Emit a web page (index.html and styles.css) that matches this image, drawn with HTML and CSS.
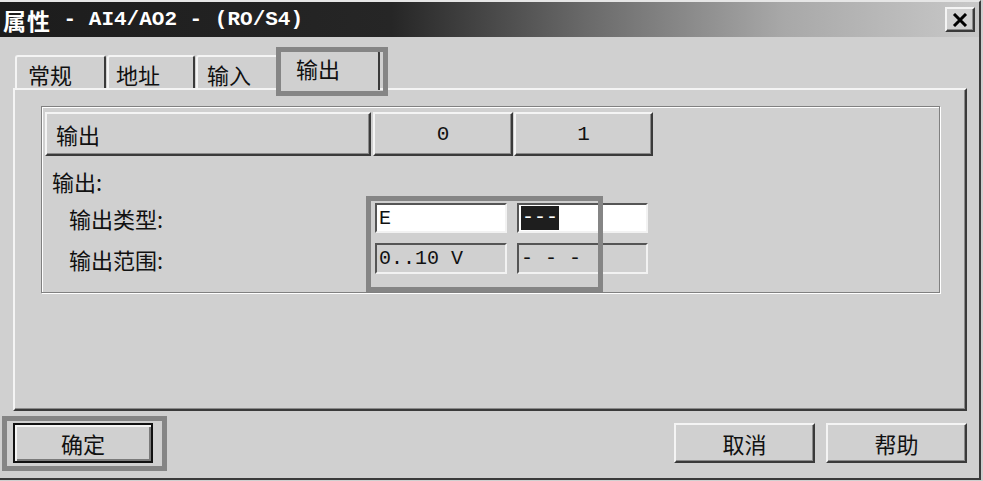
FILE: index.html
```html
<!DOCTYPE html>
<html lang="zh-CN">
<head>
<meta charset="utf-8">
<title>属性 - AI4/AO2 - (RO/S4)</title>
<link rel="stylesheet" href="styles.css">
</head>
<body>
<div class="window">
  <div class="titlebar">
    <div class="title"><span class="title-cjk">属性</span><span class="title-mono"> - AI4/AO2 - (RO/S4)</span></div>
    <div class="close">
      <svg width="16" height="14" viewBox="0 0 16 14"><path d="M2 1 L14 13 M14 1 L2 13" stroke="#000" stroke-width="3" fill="none"/></svg>
    </div>
  </div>

  <div class="tabs">
    <div class="tab tab-1">常规</div>
    <div class="tab tab-2">地址</div>
    <div class="tab tab-3">输入</div>
    <div class="tab tab-active">输出</div>
  </div>

  <div class="panel">
    <div class="group">
      <div class="header">
        <div class="hcell hname">输出</div>
        <div class="hcell hnum h0">0</div>
        <div class="hcell hnum h1">1</div>
      </div>
      <div class="section">输出:</div>
      <div class="rows">
        <div class="label">输出类型:</div>
        <div class="field field-white">E</div>
        <div class="field field-white"><span class="sel">---</span></div>
        <div class="label">输出范围:</div>
        <div class="field">0..10 V</div>
        <div class="field">- - -</div>
      </div>
    </div>
  </div>

  <div class="buttons">
    <div class="btn btn-default">确定</div>
    <div class="btn-group">
      <div class="btn">取消</div>
      <div class="btn">帮助</div>
    </div>
  </div>

  <div class="mark mark-tab"></div>
  <div class="mark mark-fields"></div>
  <div class="mark mark-ok"></div>
</div>
</body>
</html>
```

FILE: styles.css
```css
html, body {
  margin: 0;
  padding: 0;
  background: #d0d0d0;
}

body {
  width: 983px;
  height: 481px;
  overflow: hidden;
  font-family: "Noto Sans CJK SC", "Liberation Sans", sans-serif;
  font-size: 22px;
  color: #111;
}

.window {
  position: relative;
  box-sizing: border-box;
  width: 981px;
  height: 480px;
  background: #d0d0d0;
  border-top: 2px solid #e6e6e6;
  border-right: 2px solid #3a3a3a;
  border-bottom: 2px solid #3a3a3a;
  display: flex;
  flex-direction: column;
}

/* Title bar */
.titlebar {
  height: 35px;
  flex: none;
  display: flex;
  align-items: center;
  justify-content: space-between;
  padding: 0 4px 0 3px;
  background: linear-gradient(to right, #1c1c1c 0%, #262626 40%, #6a6a6a 60%, #a8a8a8 80%, #c8c8c8 100%);
  color: #fff;
}

.title {
  display: flex;
  align-items: center;
  font-weight: bold;
  white-space: pre;
}

.title-cjk {
  font-size: 23px;
  letter-spacing: 1px;
}

.title-mono {
  font-family: "Liberation Mono", monospace;
  font-size: 21px;
}

.close {
  box-sizing: border-box;
  width: 30px;
  height: 25px;
  background: #d0d0d0;
  border: 2px solid;
  border-color: #f4f4f4 #3a3a3a #3a3a3a #f4f4f4;
  box-shadow: inset -1px -1px 0 #8a8a8a;
  display: flex;
  align-items: center;
  justify-content: center;
}

/* Tabs */
.tabs {
  flex: none;
  display: flex;
  align-items: flex-end;
  height: 40px;
  margin-top: 13px;
  padding-left: 15px;
}

.tab {
  box-sizing: border-box;
  height: 33px;
  margin-bottom: 2px;
  display: flex;
  align-items: center;
  padding-left: 11px;
  padding-top: 3px;
  border-top: 2px solid #f4f4f4;
  border-left: 2px solid #f4f4f4;
  border-right: 2px solid #3a3a3a;
  border-radius: 3px 3px 0 0;
  background: #d0d0d0;
}

.tab-1 { width: 91px; }
.tab-2 { width: 88px; margin-left: 1px; padding-left: 7px; }
.tab-3 { width: 83px; margin-left: 1px; padding-left: 9px; }

.tab-active {
  position: relative;
  z-index: 1;
  width: 102px;
  height: 40px;
  margin-bottom: 0;
  margin-left: -1px;
  padding-left: 16px;
  padding-top: 0;
  padding-bottom: 6px;
}

/* Panel */
.panel {
  flex: none;
  box-sizing: border-box;
  width: 954px;
  height: 323px;
  margin: -2px 0 0 13px;
  padding: 16px 0 0 26px;
  border: 2px solid;
  border-color: #f4f4f4 #3a3a3a #3a3a3a #f4f4f4;
  box-shadow: inset -1px -1px 0 #8a8a8a;
}

.group {
  box-sizing: border-box;
  width: 899px;
  height: 187px;
  padding: 5px 0 0 3px;
  border: 1px solid #808080;
  box-shadow: inset 1px 1px 0 #fff, 1px 1px 0 #fff;
}

.header {
  display: flex;
  height: 44px;
}

.hcell {
  box-sizing: border-box;
  height: 44px;
  display: flex;
  align-items: center;
  border: 2px solid;
  border-color: #f4f4f4 #3a3a3a #3a3a3a #f4f4f4;
  box-shadow: inset -1px -1px 0 #8a8a8a;
}

.hname {
  width: 326px;
  padding-left: 9px;
}

.hnum {
  justify-content: center;
  font-family: "Liberation Mono", monospace;
  font-size: 21px;
}

.h0 { width: 140px; margin-left: 2px; }
.h1 { width: 139px; margin-left: 1px; }

.section {
  margin-top: 11px;
  height: 28px;
  line-height: 28px;
  padding-left: 7px;
}

.rows {
  display: grid;
  grid-template-columns: 320px 132px 131px;
  grid-template-rows: 30px 31px;
  column-gap: 10px;
  row-gap: 10px;
  margin-top: 8px;
}

.label {
  display: flex;
  align-items: center;
  padding-left: 24px;
}

.field {
  box-sizing: border-box;
  display: flex;
  align-items: center;
  padding-left: 2px;
  font-family: "Liberation Mono", monospace;
  font-size: 20px;
  background: #d0d0d0;
  border-top: 2px solid #555;
  border-left: 2px solid #555;
  border-bottom: 2px solid #f2f2f2;
  border-right: 2px solid #f2f2f2;
}

.field-white {
  background: #fff;
}

.sel {
  background: #1e1e1e;
  color: #fff;
  line-height: 24px;
  padding: 0 1px;
}

/* Buttons */
.buttons {
  flex: none;
  display: flex;
  justify-content: space-between;
  height: 40px;
  margin: 12px 12px 0 13px;
}

.btn-group {
  display: flex;
  gap: 11px;
}

.btn {
  box-sizing: border-box;
  width: 141px;
  height: 40px;
  display: flex;
  align-items: center;
  justify-content: center;
  border: 2px solid;
  border-color: #f4f4f4 #3a3a3a #3a3a3a #f4f4f4;
  box-shadow: inset -1px -1px 0 #8a8a8a;
}

.btn-default {
  width: 140px;
  border: 2px solid #111;
  box-shadow: inset 2px 2px 0 #f4f4f4, inset -2px -2px 0 #7a7a7a;
}

/* Annotation highlight boxes drawn over the dialog */
.mark {
  position: absolute;
  box-sizing: border-box;
  border: 5px solid #858585;
  z-index: 5;
}

.mark-tab { left: 276px; top: 45px; width: 112px; height: 49px; }
.mark-fields { left: 366px; top: 194px; width: 237px; height: 96px; }
.mark-ok { left: 2px; top: 414px; width: 165px; height: 55px; }
```
